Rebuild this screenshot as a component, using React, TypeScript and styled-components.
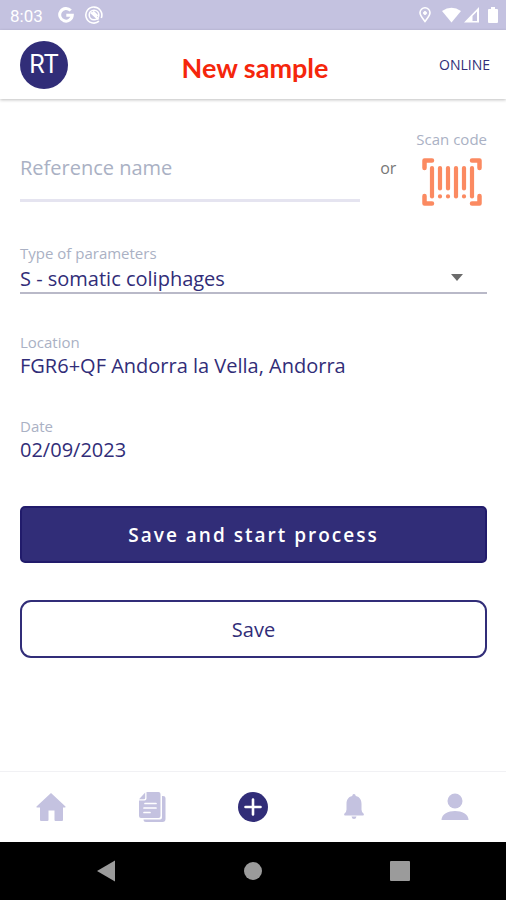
import React from "react";
import styled, { createGlobalStyle } from "styled-components";

const NAVY = "#312d78";
const LILAC = "#c4c2e0";
const MUTED = "#aab1c4";

const GlobalStyle = createGlobalStyle`
  *, *::before, *::after { box-sizing: border-box; }
  body { margin: 0; background: #fff; font-family: "Open Sans", "Noto Sans", sans-serif; color: ${NAVY}; }
  button, input, select { font: inherit; color: inherit; }
`;

const Screen = styled.div`
  display: flex;
  flex-direction: column;
  min-height: 100vh;
`;

const StatusBar = styled.div`
  display: flex;
  align-items: center;
  justify-content: space-between;
  height: 30px;
  padding: 0 6px 0 10px;
  background: ${LILAC};
  color: #fff;
  font: 17px/30px Roboto, sans-serif;
`;

const StatusGroup = styled.div<{ $gap: number }>`
  display: flex;
  align-items: center;
  gap: ${(p) => p.$gap}px;
  svg { display: block; }
`;

const Clock = styled.span`
  margin-right: 4px;
  padding-top: 2px;
`;

const Header = styled.header`
  display: grid;
  grid-template-columns: 1fr auto 1fr;
  align-items: center;
  height: 69px;
  padding: 0 16px 0 20px;
  box-shadow: 0 1px 3px rgba(0, 0, 0, 0.25);
`;

const Avatar = styled.button`
  width: 48px;
  height: 48px;
  padding: 0;
  border: 0;
  border-radius: 50%;
  background: ${NAVY};
  color: #fff;
  font: 400 25px/48px Roboto, sans-serif;
`;

const Title = styled.h1`
  margin: 0;
  padding-top: 6px;
  color: #f5260c;
  font: 700 27px/32px Lato, sans-serif;
`;

const Connection = styled.span`
  justify-self: end;
  font-size: 14px;
  line-height: 20px;
`;

const Form = styled.form`
  flex: 1;
  display: flex;
  flex-direction: column;
  padding: 30px 19px 40px 20px;
`;

const ReferenceRow = styled.div`
  display: flex;
  align-items: flex-end;
`;

const ReferenceInput = styled.input`
  flex: 1;
  min-width: 0;
  height: 66px;
  margin-bottom: 4px;
  padding: 0;
  border: 0;
  border-bottom: 3px solid #e5e4f0;
  background: none;
  font-size: 20px;
  outline: none;
  &::placeholder { color: ${MUTED}; opacity: 1; }
`;

const Or = styled.span`
  padding: 0 20px 26px;
  color: #777;
  font-size: 16px;
  line-height: 24px;
`;

const ScanButton = styled.button`
  display: flex;
  flex-direction: column;
  align-items: center;
  gap: 9px;
  padding: 0;
  border: 0;
  background: none;
  color: ${MUTED};
  font-size: 15px;
  line-height: 20px;
`;

const Field = styled.div<{ $top: number }>`
  display: flex;
  flex-direction: column;
  margin-top: ${(p) => p.$top}px;
`;

const Label = styled.label`
  color: ${MUTED};
  font-size: 15px;
  line-height: 20px;
`;

const SelectBox = styled.div`
  display: grid;
  align-items: center;
  border-bottom: 2px solid #b9b9c8;
  > * { grid-area: 1 / 1; }
  svg { justify-self: end; margin-right: 24px; pointer-events: none; }
`;

const Select = styled.select`
  appearance: none;
  width: 100%;
  height: 29px;
  padding: 2px 0 0;
  border: 0;
  background: none;
  font-size: 20px;
  outline: none;
`;

const Value = styled.output`
  font-size: 20px;
  line-height: 28px;
`;

const PrimaryButton = styled.button`
  height: 57px;
  margin-top: 42px;
  border: 2px solid #211b6b;
  border-radius: 5px;
  background: ${NAVY};
  color: #fff;
  font-size: 19px;
  font-weight: 600;
  letter-spacing: 2px;
`;

const SecondaryButton = styled.button`
  height: 58px;
  margin-top: 37px;
  border: 2px solid ${NAVY};
  border-radius: 11px;
  background: #fff;
  font-size: 20px;
  font-weight: 500;
`;

const TabBar = styled.nav`
  display: grid;
  grid-template-columns: repeat(5, 1fr);
  height: 71px;
  border-top: 1px solid #f1f1f4;
`;

const Tab = styled.button<{ $active?: boolean }>`
  display: flex;
  align-items: center;
  justify-content: center;
  padding: 0;
  border: 0;
  background: none;
  color: ${(p) => (p.$active ? NAVY : LILAC)};
`;

const SystemBar = styled.nav`
  display: grid;
  grid-template-columns: 33px repeat(3, 1fr) 33px;
  height: 58px;
  background: #000;
`;

const SystemButton = styled.button`
  display: flex;
  align-items: center;
  justify-content: center;
  padding: 0;
  border: 0;
  background: none;
  color: #9b9b9b;
  &:first-child { grid-column: 2; }
`;

const bars = [
  { x: 10, full: true },
  { x: 18, full: false },
  { x: 26, full: false },
  { x: 34, full: true },
  { x: 42, full: false },
  { x: 50, full: true },
];

const BarcodeIcon = () => (
  <svg width="60" height="48" viewBox="0 0 60 48" fill="none" stroke="#fb8a61" aria-hidden="true">
    <path d="M2.500 10V2.500H10M50 2.500h7.500V10M57.500 38v7.500H50M10 45.500H2.500V38" strokeWidth="4.500" strokeLinecap="round" strokeLinejoin="round" />
    {bars.map((b) => (
      <path key={b.x} d={b.full ? `M${b.x} 10V38.500` : `M${b.x} 10V30.500M${b.x} 38.300v.1`} strokeWidth="4.200" strokeLinecap="round" />
    ))}
  </svg>
);

export default function App() {
  return (
    <Screen>
      <GlobalStyle />
      <StatusBar>
        <StatusGroup $gap={11}>
          <Clock>8:03</Clock>
          <svg width="16" height="16" viewBox="0 0 16 16" fill="none" stroke="#fff" strokeWidth="3">
            <path d="M12.700 3.600A6.300 6.300 0 1 0 14.300 8.200H8.300" />
          </svg>
          <svg width="18" height="18" viewBox="0 0 18 18" fill="none" stroke="#fff" strokeWidth="1.600">
            <path d="M14 15.200A8 8 0 1 1 16.300 12" />
            <circle cx="9" cy="9" r="4.800" />
            <path d="M6 6.500l7.500 7M8 5.500l4.500 4.500" strokeWidth="2" />
          </svg>
        </StatusGroup>
        <StatusGroup $gap={3}>
          <svg width="12" height="16" viewBox="0 0 12 16" fill="none" stroke="#fff" strokeWidth="1.600">
            <path d="M6 14.500C3.500 11.200 1 8.300 1 5.800a5 5 0 0 1 10 0c0 2.500-2.500 5.400-5 8.700z" />
            <circle cx="6" cy="6" r="1.500" fill="#fff" strokeWidth="1" />
          </svg>
          <svg width="27" height="16" viewBox="0 0 27 16" fill="#fff">
            <path d="M8 4Q17.500-2.500 27 4L17.500 15.500z" />
          </svg>
          <svg width="15" height="16" viewBox="0 0 15 16" fill="#fff">
            <path fillRule="evenodd" d="M0 15.500L15 0V15.500zM8.500 9V14H13V4.500z" />
          </svg>
          <svg width="18" height="16" viewBox="0 0 18 16" fill="#fff">
            <path d="M7 2h2V0h4v2h2q1 0 1 1v12q0 1-1 1H7q-1 0-1-1V3q0-1 1-1z" />
          </svg>
        </StatusGroup>
      </StatusBar>

      <Header>
        <Avatar type="button">RT</Avatar>
        <Title>New sample</Title>
        <Connection>ONLINE</Connection>
      </Header>

      <Form onSubmit={(e) => e.preventDefault()}>
        <ReferenceRow>
          <ReferenceInput type="text" placeholder="Reference name" aria-label="Reference name" />
          <Or>or</Or>
          <ScanButton type="button">
            Scan code
            <BarcodeIcon />
          </ScanButton>
        </ReferenceRow>

        <Field $top={37}>
          <Label htmlFor="parameters">Type of parameters</Label>
          <SelectBox>
            <Select id="parameters">
              <option>S - somatic coliphages</option>
            </Select>
            <svg width="12" height="7" viewBox="0 0 12 7" fill="#6b6b6b" aria-hidden="true">
              <path d="M0 0h12L6 7z" />
            </svg>
          </SelectBox>
        </Field>

        <Field $top={38}>
          <Label htmlFor="location">Location</Label>
          <Value id="location">FGR6+QF Andorra la Vella, Andorra</Value>
        </Field>

        <Field $top={36}>
          <Label htmlFor="date">Date</Label>
          <Value id="date">02/09/2023</Value>
        </Field>

        <PrimaryButton type="submit">Save and start process</PrimaryButton>
        <SecondaryButton type="button">Save</SecondaryButton>
      </Form>

      <TabBar aria-label="Main">
        <Tab type="button" aria-label="Home">
          <svg width="30" height="30" viewBox="0 0 30 30" fill="currentColor">
            <path d="M15 1L29.500 14.500Q29.800 15.500 29 15.500H27V28q0 1-1 1H19.500q-1 0-1-1V18.500h-6V28q0 1-1 1H5q-1 0-1-1V15.500H1Q0 15.500.5 14.500z" />
          </svg>
        </Tab>
        <Tab type="button" aria-label="Samples">
          <svg width="28" height="30" viewBox="0 0 28 30" fill="currentColor">
            <path d="M8.500 0H20.500q2 0 2 2V24q0 2-2 2H3q-2 0-2-2V8.500H6.500q2 0 2-2z" />
            <path d="M7.200 .5V5.700q0 1.500-1.500 1.500H1z" />
            <path d="M24 4H25q2.500 0 2.500 2V27q0 3-3 3H8q-2.500 0-2.500-2.500H22q2 0 2-2z" />
            <path d="M7 11.500H18M6 16H18M6 20.500H12" stroke="#fff" strokeWidth="1.700" strokeLinecap="round" />
          </svg>
        </Tab>
        <Tab type="button" aria-label="New sample" $active>
          <svg width="30" height="30" viewBox="0 0 30 30">
            <circle cx="15" cy="15" r="15" fill="currentColor" />
            <path d="M15 7.500v15M7.500 15h15" stroke="#fff" strokeWidth="2.600" strokeLinecap="round" />
          </svg>
        </Tab>
        <Tab type="button" aria-label="Notifications">
          <svg width="20" height="26" viewBox="0 0 20 26" fill="currentColor">
            <path d="M10 0q1.500 0 1.800 2C16 3 17.500 6 17.500 10v5.500q0 2.500 2 4Q20.500 21.500 19 21.500H1q-1.500 0-.5-2 2-1.500 2-4V10C2.500 6 4 3 8.200 2 8.500 0 10 0 10 0zM7.500 22.500h5q-.5 2.500-2.500 2.500t-2.500-2.500z" />
          </svg>
        </Tab>
        <Tab type="button" aria-label="Profile">
          <svg width="28" height="28" viewBox="0 0 28 28" fill="currentColor">
            <circle cx="14" cy="8" r="7.500" />
            <path d="M.5 27C.5 15 27.500 15 27.500 27z" />
          </svg>
        </Tab>
      </TabBar>

      <SystemBar aria-label="System">
        <SystemButton type="button" aria-label="Back">
          <svg width="18" height="22" viewBox="0 0 18 22" fill="currentColor">
            <path d="M0 11L18 .5v21z" />
          </svg>
        </SystemButton>
        <SystemButton type="button" aria-label="Home screen">
          <svg width="18" height="18" viewBox="0 0 18 18" fill="currentColor">
            <circle cx="9" cy="9" r="9" />
          </svg>
        </SystemButton>
        <SystemButton type="button" aria-label="Recent apps">
          <svg width="20" height="20" viewBox="0 0 20 20" fill="currentColor">
            <rect width="20" height="20" rx="1" />
          </svg>
        </SystemButton>
      </SystemBar>
    </Screen>
  );
}
